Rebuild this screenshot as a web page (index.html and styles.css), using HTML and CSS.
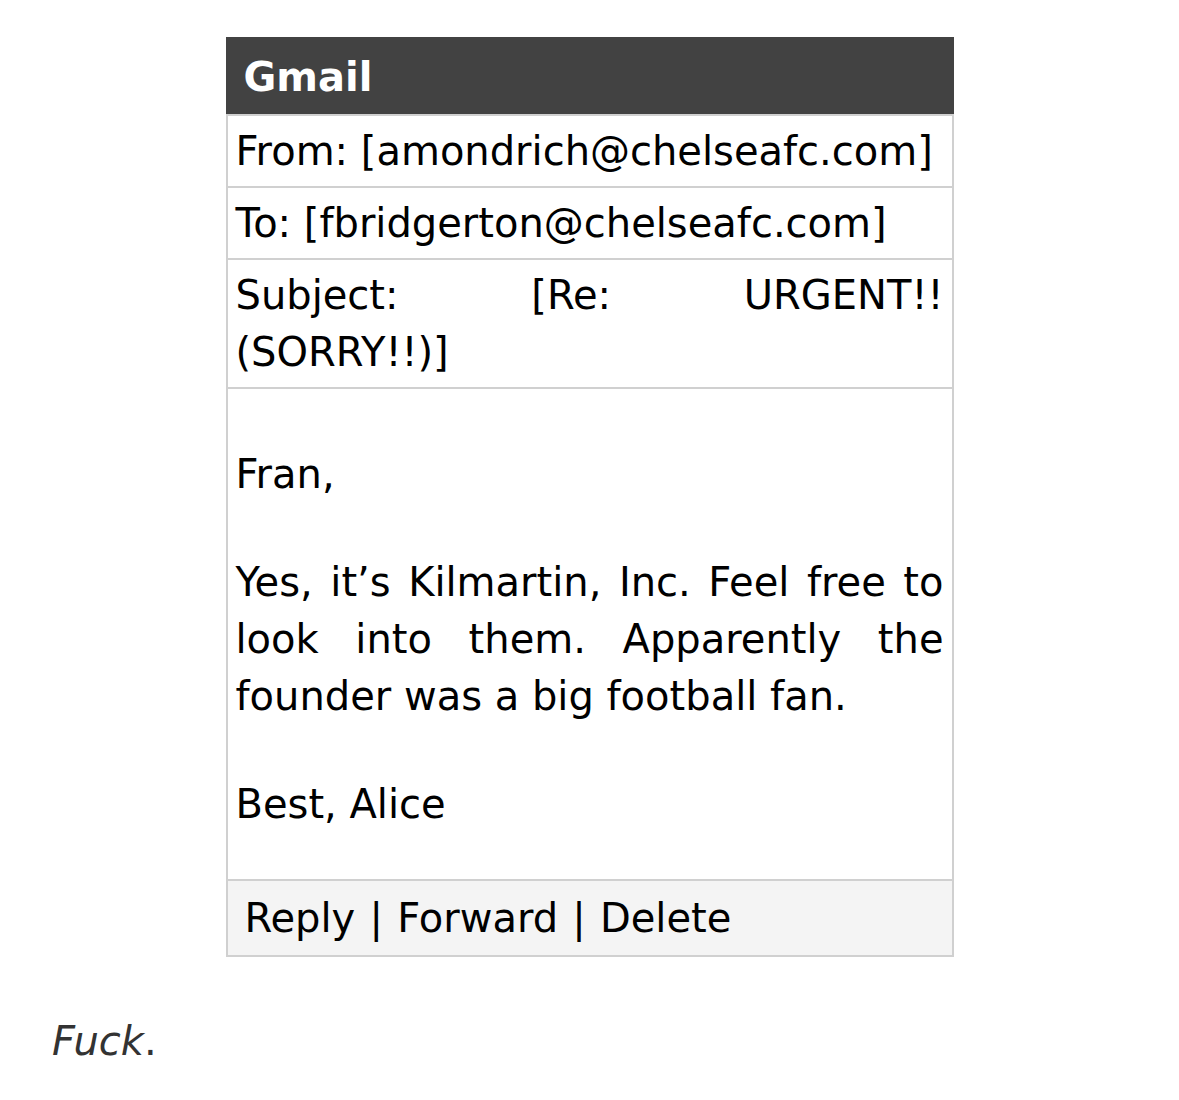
FILE: index.html
```html
<!DOCTYPE html>
<html>
<head>
<meta charset="utf-8">
<link rel="stylesheet" href="styles.css">
</head>
<body>
<div class="page">
  <div class="email">
    <div class="email-header">Gmail</div>
    <div class="email-rows">
      <div class="row">From: [amondrich@chelseafc.com]</div>
      <div class="row">To: [fbridgerton@chelseafc.com]</div>
      <div class="row subject">Subject: [Re: URGENT!! (SORRY!!)]</div>
      <div class="row body">
        <p>Fran,</p>
        <p>Yes, it’s Kilmartin, Inc. Feel free to look into them. Apparently the founder was a big football fan.</p>
        <p>Best, Alice</p>
      </div>
      <div class="row actions">Reply | Forward | Delete</div>
    </div>
  </div>
  <p class="after"><em>Fuck</em>.</p>
</div>
</body>
</html>
```

FILE: styles.css
```css
html, body {
  margin: 0;
  padding: 0;
  background: #fff;
}

.page {
  padding: 37px 52px 0;
  font-family: "DejaVu Sans", Verdana, sans-serif;
}

.email {
  width: 728px;
  margin: 0 auto;
}

.email-header {
  background: #424242;
  color: #fff;
  font-weight: bold;
  font-size: 40px;
  height: 77px;
  line-height: 80px;
  padding-left: 18px;
}

.email-rows {
  border-left: 2px solid #d0d0d0;
  border-right: 2px solid #d0d0d0;
  border-bottom: 2px solid #d0d0d0;
}

.row {
  border-top: 2px solid #d0d0d0;
  padding: 6.5px 8px;
  font-size: 40px;
  line-height: 57px;
  color: #000;
  text-align: justify;
}

.row.subject {
  word-spacing: 6px;
}

.row.body {
  padding-top: 57px;
  padding-bottom: 46px;
}

.row.body p {
  margin: 0 0 51px;
}

.row.body p:last-child {
  margin-bottom: 0;
}

.row.actions {
  background: #f4f4f4;
  padding-left: 17px;
  padding-top: 9px;
  padding-bottom: 8px;
  word-spacing: 1.5px;
}

.after {
  margin: 56px 0 0;
  font-size: 40px;
  color: #333;
  line-height: 57px;
}
```
